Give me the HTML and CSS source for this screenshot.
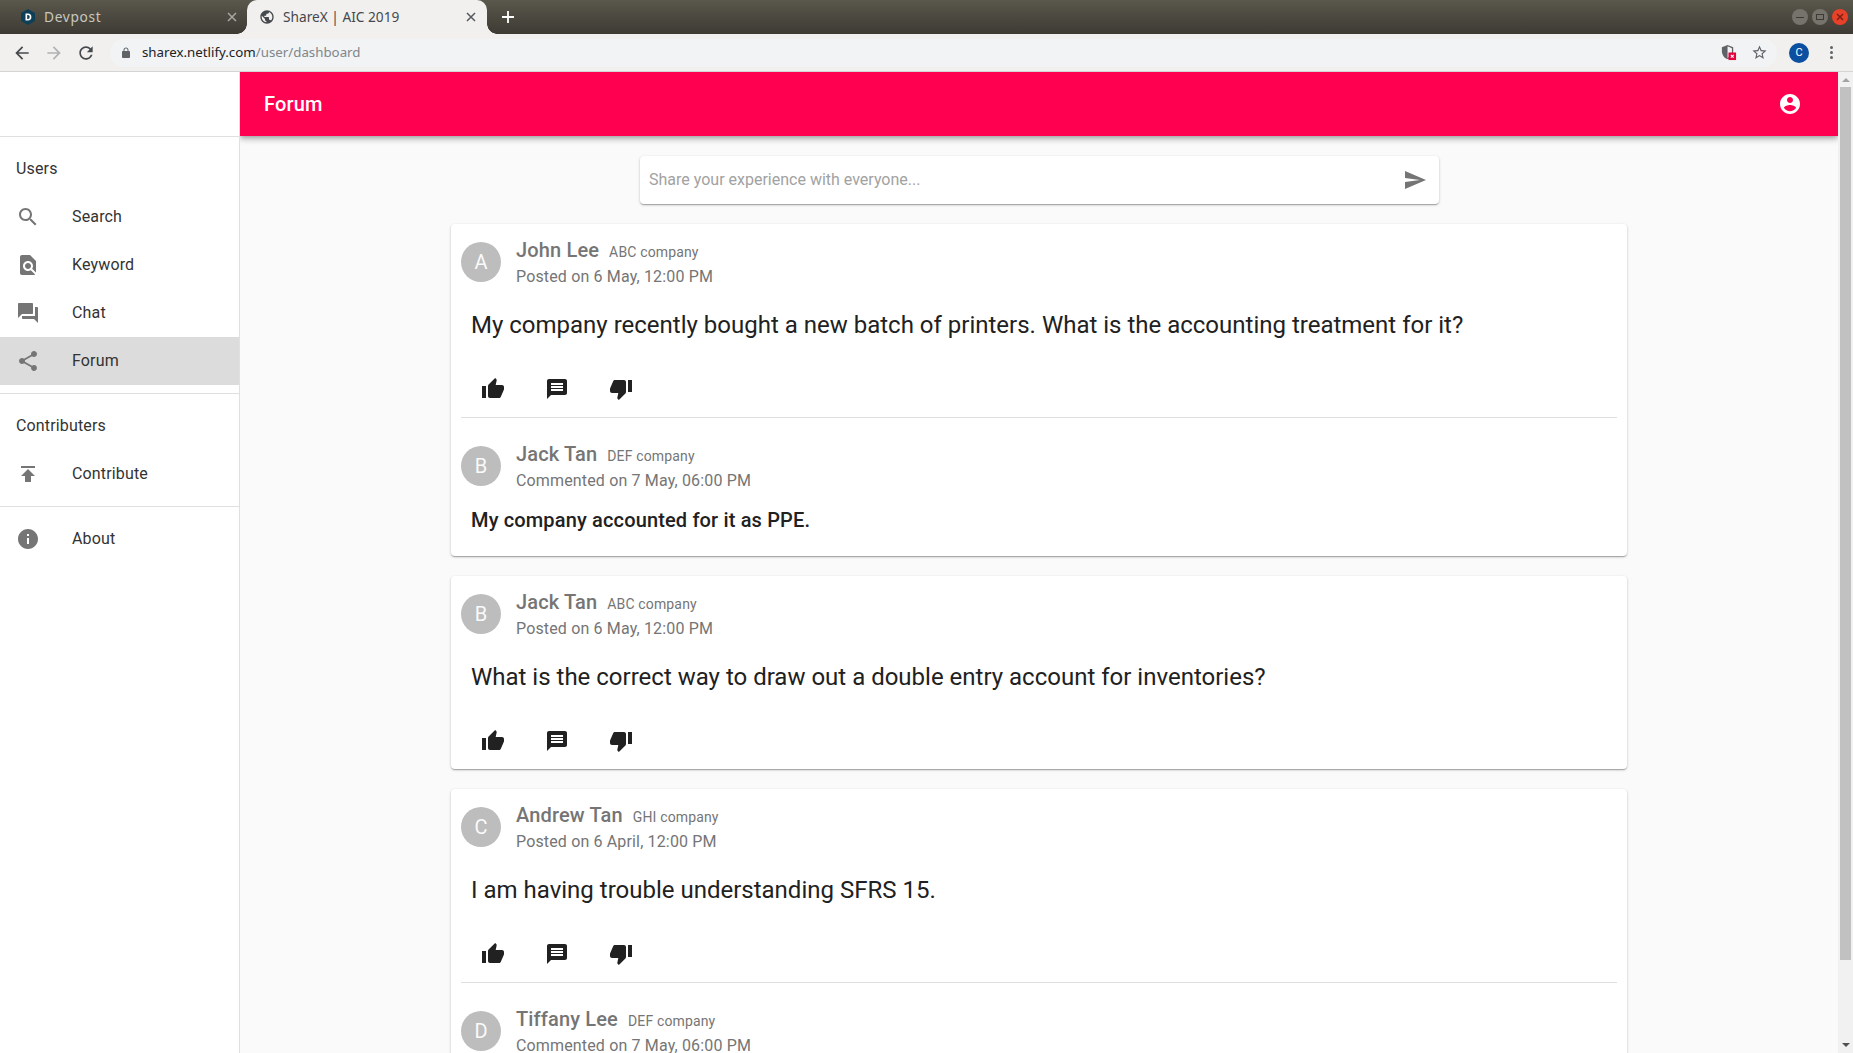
FILE: index.html
```html
<!DOCTYPE html>
<html lang="en">
<head>
    <meta charset="UTF-8">
    <meta name="viewport" content="width=device-width, initial-scale=1.0">
    <title>ShareX | AIC 2019</title>
    <link rel="stylesheet" href="styles.css">
</head>
<body>
<div class="browser-tabs">
    <div class="tab">
        <svg class="tab-icon" viewBox="0 0 16 16"><path fill="#0f3f57" d="M8 0l7 4v8l-7 4-7-4V4z"/><path fill="#fff" d="M5.500 4.500H8c2.200 0 3.400 1.400 3.400 3.500S10.200 11.500 8 11.500H5.500zM7.200 6v4H8c1.100 0 1.700-.8 1.700-2S9.100 6 8 6z"/></svg>
        <span class="tab-title tab-title-wide">Devpost</span>
        <svg class="tab-close" viewBox="0 0 10 10"><path d="M1 1l8 8m0-8l-8 8"/></svg>
    </div>
    <div class="tab tab-active">
        <svg class="tab-icon" viewBox="0 0 24 24"><path fill="#45484c" d="M12 2C6.480 2 2 6.480 2 12s4.480 10 10 10 10-4.480 10-10S17.520 2 12 2zm-1 17.930c-3.950-.49-7-3.850-7-7.930 0-.62.080-1.210.21-1.790L9 15v1c0 1.100.9 2 2 2v1.930zm6.900-2.540c-.26-.81-1-1.390-1.900-1.390h-1v-3c0-.55-.45-1-1-1H8v-2h2c.55 0 1-.45 1-1V7h2c1.100 0 2-.9 2-2v-.41c2.930 1.190 5 4.060 5 7.410 0 2.080-.8 3.970-2.100 5.390z"/></svg>
        <span class="tab-title">ShareX | AIC 2019</span>
        <svg class="tab-close" viewBox="0 0 10 10"><path d="M1 1l8 8m0-8l-8 8"/></svg>
    </div>
    <svg class="new-tab" viewBox="0 0 14 14"><path d="M7 1v12M1 7h12" stroke="#fff" stroke-width="1.800"/></svg>
    <div class="window-buttons">
        <span class="win-btn"><i class="win-min"></i></span>
        <span class="win-btn"><i class="win-max"></i></span>
        <span class="win-btn win-close"><svg viewBox="0 0 10 10"><path d="M2 2l6 6m0-6l-6 6"/></svg></span>
    </div>
</div>

<div class="browser-toolbar">
    <svg class="nav-icon" viewBox="0 0 24 24"><path fill="#45484c" d="M20 11H7.830l5.590-5.590L12 4l-8 8 8 8 1.410-1.410L7.830 13H20v-2z"/></svg>
    <svg class="nav-icon" viewBox="0 0 24 24"><path fill="#b0b2b4" d="M12 4l-1.410 1.410L16.170 11H4v2h12.170l-5.580 5.590L12 20l8-8z"/></svg>
    <svg class="nav-icon" viewBox="0 0 24 24"><path fill="#45484c" d="M17.650 6.350C16.200 4.900 14.210 4 12 4c-4.420 0-7.990 3.580-7.990 8s3.570 8 7.990 8c3.730 0 6.840-2.550 7.730-6h-2.080c-.82 2.330-3.040 4-5.650 4-3.310 0-6-2.690-6-6s2.690-6 6-6c1.660 0 3.140.69 4.220 1.780L13 11h7V4l-2.350 2.350z"/></svg>
    <div class="address-bar">
        <svg class="lock" viewBox="0 0 24 24"><path fill="#5f6368" d="M18 8h-1V6c0-2.760-2.240-5-5-5S7 3.240 7 6v2H6c-1.100 0-2 .9-2 2v10c0 1.100.9 2 2 2h12c1.100 0 2-.9 2-2V10c0-1.100-.9-2-2-2zM9 6c0-1.660 1.340-3 3-3s3 1.340 3 3v2H9V6z"/></svg>
        <span class="url">sharex.netlify.com<span class="url-path">/user/dashboard</span></span>
        <span class="address-right">
            <svg class="shield" viewBox="0 0 18 18"><path fill="#5f6368" d="M8 1L2 3.500v4.200C2 11.500 4.500 15 8 16c3.500-1 6-4.500 6-8.300V3.500z"/><path fill="#f1f3f4" d="M8 2.500v12.300c2.700-1 4.600-3.900 4.600-7V4.400z"/><rect x="9" y="9" width="8" height="8" fill="#e8003d"/><path d="M11.500 11.500l3 3m0-3l-3 3" stroke="#fff" stroke-width="1.200"/></svg>
            <svg class="star" viewBox="0 0 24 24"><path fill="#5f6368" d="M22 9.240l-7.190-.62L12 2 9.190 8.630 2 9.240l5.460 4.730L5.820 21 12 17.270 18.180 21l-1.630-7.030L22 9.240zM12 15.400l-3.760 2.270 1-4.280-3.320-2.880 4.380-.38L12 6.100l1.710 4.040 4.380.38-3.320 2.880 1 4.280L12 15.400z"/></svg>
        </span>
    </div>
    <span class="profile">C</span>
    <span class="menu-dots"><i></i><i></i><i></i></span>
</div>

<div class="app">
    <nav class="sidebar">
        <div class="sidebar-top"></div>
        <div class="nav-group">
            <div class="nav-title"><span>Users</span></div>
            <div class="nav-item">
                <svg class="nav-item-icon" viewBox="0 0 24 24"><path d="M15.500 14h-.79l-.28-.27C15.410 12.590 16 11.110 16 9.500 16 5.910 13.090 3 9.500 3S3 5.910 3 9.500 5.910 16 9.500 16c1.610 0 3.090-.59 4.230-1.570l.27.28v.79l5 4.990L20.490 19l-4.990-5zm-6 0C7.010 14 5 11.990 5 9.500S7.010 5 9.500 5 14 7.010 14 9.500 11.990 14 9.500 14z"/></svg>
                <span>Search</span>
            </div>
            <div class="nav-item">
                <svg class="nav-item-icon" viewBox="0 0 24 24"><path d="M20 19.590V8l-6-6H6c-1.100 0-1.990.9-1.990 2L4 20c0 1.100.89 2 1.990 2H18c.45 0 .85-.15 1.190-.4l-4.430-4.430c-.8.520-1.740.83-2.760.83-2.760 0-5-2.240-5-5s2.240-5 5-5 5 2.240 5 5c0 1.020-.31 1.960-.83 2.750L20 19.590zM9 13c0 1.660 1.340 3 3 3s3-1.340 3-3-1.340-3-3-3-3 1.340-3 3z"/></svg>
                <span>Keyword</span>
            </div>
            <div class="nav-item">
                <svg class="nav-item-icon" viewBox="0 0 24 24"><path d="M21 6h-2v9H6v2c0 .55.45 1 1 1h11l4 4V7c0-.55-.45-1-1-1zm-4 6V3c0-.55-.45-1-1-1H3c-.55 0-1 .45-1 1v14l4-4h10c.55 0 1-.45 1-1z"/></svg>
                <span>Chat</span>
            </div>
            <div class="nav-item nav-item-active">
                <svg class="nav-item-icon" viewBox="0 0 24 24"><path d="M18 16.080c-.76 0-1.440.3-1.960.77L8.910 12.700c.05-.23.09-.46.09-.7s-.04-.47-.09-.7l7.050-4.110c.54.5 1.250.81 2.040.81 1.660 0 3-1.340 3-3s-1.340-3-3-3-3 1.340-3 3c0 .24.04.47.09.7L8.040 9.810C7.500 9.310 6.790 9 6 9c-1.660 0-3 1.340-3 3s1.340 3 3 3c.79 0 1.500-.31 2.040-.81l7.120 4.160c-.05.21-.08.43-.08.65 0 1.610 1.310 2.920 2.920 2.920 1.610 0 2.920-1.310 2.920-2.920s-1.310-2.920-2.920-2.920z"/></svg>
                <span>Forum</span>
            </div>
        </div>
        <div class="nav-group">
            <div class="nav-title"><span>Contributers</span></div>
            <div class="nav-item">
                <svg class="nav-item-icon" viewBox="0 0 24 24"><path d="M5 4v2h14V4H5zm0 10h4v6h6v-6h4l-7-7-7 7z"/></svg>
                <span>Contribute</span>
            </div>
        </div>
        <div class="nav-group">
            <div class="nav-item">
                <svg class="nav-item-icon" viewBox="0 0 24 24"><path d="M12 2C6.480 2 2 6.480 2 12s4.480 10 10 10 10-4.480 10-10S17.520 2 12 2zm1 15h-2v-6h2v6zm0-8h-2V7h2v2z"/></svg>
                <span>About</span>
            </div>
        </div>
    </nav>

    <div class="main">
        <header class="app-bar">
            <h1>Forum</h1>
            <svg class="account-icon" viewBox="0 0 24 24"><path d="M12 2C6.480 2 2 6.480 2 12s4.480 10 10 10 10-4.480 10-10S17.520 2 12 2zm0 3c1.660 0 3 1.340 3 3s-1.340 3-3 3-3-1.340-3-3 1.340-3 3-3zm0 14.200c-2.500 0-4.710-1.280-6-3.220.03-1.990 4-3.080 6-3.080 1.990 0 5.970 1.090 6 3.080-1.290 1.940-3.500 3.220-6 3.220z"/></svg>
        </header>
        <div class="content">
            <div class="share-box">
                <span class="share-placeholder">Share your experience with everyone...</span>
                <svg class="send-icon" viewBox="0 0 24 24"><path d="M2.010 21L23 12 2.010 3 2 10l15 2-15 2z"/></svg>
            </div>

            <article class="card">
                <div class="post-head">
                    <div class="avatar">A</div>
                    <div>
                        <div class="head-line"><span class="name">John Lee</span><span class="company">ABC company</span></div>
                        <div class="date">Posted on 6 May, 12:00 PM</div>
                    </div>
                </div>
                <p class="post-text">My company recently bought a new batch of printers. What is the accounting treatment for it?</p>
                <div class="actions">
                    <svg viewBox="0 0 24 24"><path d="M1 21h4V9H1v12zm22-11c0-1.100-.9-2-2-2h-6.310l.95-4.570.03-.32c0-.41-.17-.79-.44-1.060L14.170 1 7.590 7.590C7.220 7.950 7 8.450 7 9v10c0 1.100.9 2 2 2h9c.83 0 1.540-.5 1.840-1.220l3.020-7.050c.09-.23.14-.47.14-.73v-2z"/></svg>
                    <svg viewBox="0 0 24 24"><path d="M20 2H4c-1.100 0-1.990.9-1.990 2L2 22l4-4h14c1.100 0 2-.9 2-2V4c0-1.100-.9-2-2-2zm-2 12H6v-2h12v2zm0-3H6V9h12v2zm0-3H6V6h12v2z"/></svg>
                    <svg viewBox="0 0 24 24"><path d="M15 3H6c-.83 0-1.540.5-1.840 1.220l-3.020 7.050c-.09.23-.14.47-.14.730v2c0 1.100.9 2 2 2h6.310l-.95 4.570-.03.320c0 .41.170.79.440 1.060L9.830 23l6.590-6.590c.36-.36.580-.86.580-1.410V5c0-1.100-.9-2-2-2zm4 0v12h4V3h-4z"/></svg>
                </div>
                <hr class="card-line">
                <div class="post-head comment-head">
                    <div class="avatar">B</div>
                    <div>
                        <div class="head-line"><span class="name">Jack Tan</span><span class="company">DEF company</span></div>
                        <div class="date">Commented on 7 May, 06:00 PM</div>
                    </div>
                </div>
                <p class="comment-text">My company accounted for it as PPE.</p>
            </article>

            <article class="card">
                <div class="post-head">
                    <div class="avatar">B</div>
                    <div>
                        <div class="head-line"><span class="name">Jack Tan</span><span class="company">ABC company</span></div>
                        <div class="date">Posted on 6 May, 12:00 PM</div>
                    </div>
                </div>
                <p class="post-text">What is the correct way to draw out a double entry account for inventories?</p>
                <div class="actions actions-last">
                    <svg viewBox="0 0 24 24"><path d="M1 21h4V9H1v12zm22-11c0-1.100-.9-2-2-2h-6.310l.95-4.570.03-.32c0-.41-.17-.79-.44-1.060L14.170 1 7.590 7.590C7.220 7.950 7 8.450 7 9v10c0 1.100.9 2 2 2h9c.83 0 1.540-.5 1.840-1.220l3.020-7.050c.09-.23.14-.47.14-.73v-2z"/></svg>
                    <svg viewBox="0 0 24 24"><path d="M20 2H4c-1.100 0-1.990.9-1.990 2L2 22l4-4h14c1.100 0 2-.9 2-2V4c0-1.100-.9-2-2-2zm-2 12H6v-2h12v2zm0-3H6V9h12v2zm0-3H6V6h12v2z"/></svg>
                    <svg viewBox="0 0 24 24"><path d="M15 3H6c-.83 0-1.540.5-1.840 1.220l-3.020 7.050c-.09.23-.14.47-.14.730v2c0 1.100.9 2 2 2h6.310l-.95 4.570-.03.320c0 .41.170.79.440 1.060L9.830 23l6.590-6.590c.36-.36.580-.86.580-1.410V5c0-1.100-.9-2-2-2zm4 0v12h4V3h-4z"/></svg>
                </div>
            </article>

            <article class="card">
                <div class="post-head">
                    <div class="avatar">C</div>
                    <div>
                        <div class="head-line"><span class="name">Andrew Tan</span><span class="company">GHI company</span></div>
                        <div class="date">Posted on 6 April, 12:00 PM</div>
                    </div>
                </div>
                <p class="post-text">I am having trouble understanding SFRS 15.</p>
                <div class="actions">
                    <svg viewBox="0 0 24 24"><path d="M1 21h4V9H1v12zm22-11c0-1.100-.9-2-2-2h-6.310l.95-4.570.03-.32c0-.41-.17-.79-.44-1.060L14.170 1 7.590 7.590C7.220 7.950 7 8.450 7 9v10c0 1.100.9 2 2 2h9c.83 0 1.540-.5 1.840-1.220l3.020-7.050c.09-.23.14-.47.14-.73v-2z"/></svg>
                    <svg viewBox="0 0 24 24"><path d="M20 2H4c-1.100 0-1.990.9-1.990 2L2 22l4-4h14c1.100 0 2-.9 2-2V4c0-1.100-.9-2-2-2zm-2 12H6v-2h12v2zm0-3H6V9h12v2zm0-3H6V6h12v2z"/></svg>
                    <svg viewBox="0 0 24 24"><path d="M15 3H6c-.83 0-1.540.5-1.840 1.220l-3.020 7.050c-.09.23-.14.47-.14.730v2c0 1.100.9 2 2 2h6.310l-.95 4.570-.03.320c0 .41.170.79.440 1.060L9.830 23l6.590-6.590c.36-.36.580-.86.580-1.410V5c0-1.100-.9-2-2-2zm4 0v12h4V3h-4z"/></svg>
                </div>
                <hr class="card-line">
                <div class="post-head comment-head">
                    <div class="avatar">D</div>
                    <div>
                        <div class="head-line"><span class="name">Tiffany Lee</span><span class="company">DEF company</span></div>
                        <div class="date">Commented on 7 May, 06:00 PM</div>
                    </div>
                </div>
            </article>
        </div>
    </div>

    <div class="scrollbar">
        <span class="scroll-arrow scroll-up"></span>
        <div class="scroll-thumb"></div>
        <span class="scroll-arrow scroll-down"></span>
    </div>
</div>
</body>
</html>
```

FILE: styles.css
```css
* {
    box-sizing: border-box;
}

html, body {
    height: 100%;
}

body {
    margin: 0;
    overflow: hidden;
    font-family: Roboto, Arial, sans-serif;
    color: #212121;
    background-color: #fafafa;
}

/* Browser chrome */
.browser-tabs {
    height: 34px;
    display: flex;
    align-items: flex-end;
    background: linear-gradient(#5a584c, #3c3a33);
    font-family: "Noto Sans", sans-serif;
    font-size: 13.700px;
}

.tab {
    width: 246px;
    height: 34px;
    padding: 0 9px 0 20px;
    display: flex;
    align-items: center;
    color: #c9c7bf;
}

.tab-active {
    width: 240px;
    padding: 0 11px 0 12px;
    margin-left: 1px;
    color: #45484c;
    background-color: #f1f0ee;
    border-radius: 10px 10px 0 0;
    position: relative;
}

/* flared bottom corners of the active tab */
.tab-active::before,
.tab-active::after {
    content: "";
    position: absolute;
    bottom: 0;
    width: 10px;
    height: 10px;
}

.tab-active::before {
    left: -10px;
    background: radial-gradient(circle at 0 0, transparent 9.500px, #f1f0ee 10px);
}

.tab-active::after {
    right: -10px;
    background: radial-gradient(circle at 100% 0, transparent 9.500px, #f1f0ee 10px);
}

.tab-icon {
    width: 16px;
    height: 16px;
    flex-shrink: 0;
    margin-right: 8px;
}

.tab-title {
    flex: 1;
    white-space: nowrap;
    margin-bottom: 2px;
}

.tab-title-wide {
    letter-spacing: 0.7px;
}

.tab-close {
    width: 10px;
    height: 10px;
    fill: none;
    stroke: #a9a8a1;
    stroke-width: 1.500;
}

.tab-active .tab-close {
    stroke: #55585c;
}

.new-tab {
    width: 14px;
    height: 14px;
    margin: 0 0 10px 14px;
}

.window-buttons {
    margin-left: auto;
    height: 34px;
    padding-right: 5px;
    display: flex;
    align-items: center;
    gap: 4px;
}

.win-btn {
    width: 16px;
    height: 16px;
    border-radius: 50%;
    background-color: #75736b;
    display: flex;
    align-items: center;
    justify-content: center;
}

.win-close {
    background-color: #e8412a;
}

.win-close svg {
    width: 10px;
    height: 10px;
    fill: none;
    stroke: #7a2010;
    stroke-width: 1.500;
}

.win-min {
    width: 8px;
    height: 1px;
    background-color: #3c3a33;
}

.win-max {
    width: 8px;
    height: 6px;
    border: 1px solid #3c3a33;
}

.browser-toolbar {
    height: 38px;
    padding: 0 8px 0 12px;
    display: flex;
    align-items: center;
    background-color: #f1f0ee;
    border-bottom: 1px solid #d4d4d4;
}

.nav-icon {
    width: 20px;
    height: 20px;
    margin-right: 12px;
}

.address-bar {
    flex: 1;
    height: 28px;
    margin-left: 2px;
    display: flex;
    align-items: center;
    padding-left: 10px;
    background-color: #f1f3f4;
    border-radius: 14px;
    font-family: "Noto Sans", sans-serif;
    font-size: 13.300px;
    color: #202124;
}

.lock {
    width: 12px;
    height: 12px;
    margin-right: 10px;
}

.url {
    margin-bottom: 2px;
}

.url-path {
    color: #80868b;
}

.address-right {
    margin-left: auto;
    display: flex;
    align-items: center;
    gap: 14px;
    margin-right: 9px;
}

.shield {
    width: 17px;
    height: 17px;
}

.star {
    width: 17px;
    height: 17px;
}

.profile {
    width: 20px;
    height: 20px;
    margin-left: 12px;
    border-radius: 50%;
    background-color: #0b50a0;
    color: #fff;
    font-size: 11px;
    display: flex;
    align-items: center;
    justify-content: center;
    margin-right: 21px;
}

.menu-dots {
    display: flex;
    flex-direction: column;
    gap: 2px;
    margin-right: 12px;
}

.menu-dots i {
    width: 3px;
    height: 3px;
    border-radius: 50%;
    background-color: #5f6368;
}

/* Page */
.app {
    height: 981px;
    display: flex;
}

.sidebar {
    width: 240px;
    flex-shrink: 0;
    background-color: #fff;
    border-right: 1px solid #e0e0e0;
}

.sidebar-top {
    height: 65px;
    border-bottom: 1px solid #e0e0e0;
}

.nav-group {
    padding: 8px 0;
    border-bottom: 1px solid #e0e0e0;
    font-size: 16px;
    letter-spacing: 0.00938em;
}

.nav-group:last-child {
    border-bottom: none;
}

.nav-title,
.nav-item {
    height: 48px;
    padding-left: 16px;
    display: flex;
    align-items: center;
    color: #333;
}

.nav-title span,
.nav-item span {
    margin-bottom: 2px;
}

.nav-item-active {
    background-color: #dcdcdc;
}

.nav-item-icon {
    width: 24px;
    height: 24px;
    margin-right: 32px;
    fill: #757575;
}

.main {
    flex: 1;
    min-width: 0;
    display: flex;
    flex-direction: column;
    overflow: hidden;
}

.app-bar {
    height: 64px;
    flex-shrink: 0;
    padding: 0 24px;
    display: flex;
    align-items: center;
    justify-content: space-between;
    background-color: #ff0050;
    color: #fff;
    box-shadow: 0 2px 4px -1px rgba(0, 0, 0, 0.2), 0 4px 5px 0 rgba(0, 0, 0, 0.14), 0 1px 10px 0 rgba(0, 0, 0, 0.12);
    position: relative;
}

.app-bar h1 {
    margin: 0;
    font-size: 20px;
    font-weight: 500;
    letter-spacing: 0.0075em;
}

.account-icon {
    width: 24px;
    height: 24px;
    fill: #fff;
    margin-right: 12px;
}

.content {
    flex: 1;
    padding-top: 20px;
    display: flex;
    flex-direction: column;
    align-items: center;
}

.share-box {
    width: 799px;
    height: 48px;
    flex-shrink: 0;
    margin-left: 1px;
    padding: 0 10px 0 9px;
    display: flex;
    align-items: center;
    justify-content: space-between;
    background-color: #fff;
    border-radius: 4px;
    box-shadow: 0 1px 3px 0 rgba(0, 0, 0, 0.2), 0 1px 1px 0 rgba(0, 0, 0, 0.14), 0 2px 1px -1px rgba(0, 0, 0, 0.12);
    margin-bottom: 20px;
}

.share-placeholder {
    font-size: 16px;
    color: #a2a2a2;
    margin-bottom: 2px;
}

.send-icon {
    width: 24px;
    height: 24px;
    fill: #757575;
    margin-right: 2px;
}

.card {
    width: 1176px;
    flex-shrink: 0;
    padding: 18px 10px 0;
    background-color: #fff;
    border-radius: 4px;
    box-shadow: 0 1px 3px 0 rgba(0, 0, 0, 0.2), 0 1px 1px 0 rgba(0, 0, 0, 0.14), 0 2px 1px -1px rgba(0, 0, 0, 0.12);
    margin-bottom: 20px;
}

.post-head {
    display: flex;
    align-items: flex-start;
    gap: 15px;
}

.avatar {
    width: 40px;
    height: 40px;
    flex-shrink: 0;
    border-radius: 50%;
    background-color: #bdbdbd;
    color: #fafafa;
    font-size: 20px;
    display: flex;
    align-items: center;
    justify-content: center;
}

.head-line {
    height: 26px;
    display: flex;
    align-items: baseline;
    gap: 10px;
    margin-top: -5px;
    line-height: 26px;
}

.name {
    font-size: 20px;
    font-weight: 500;
    letter-spacing: 0.0075em;
    color: #757575;
}

.company {
    font-size: 14px;
    letter-spacing: 0.01071em;
    color: #757575;
}

.date {
    font-size: 16px;
    line-height: 24px;
    letter-spacing: 0.00938em;
    color: #757575;
    margin-top: 2px;
}

.post-text {
    margin: 20px 0 0 10px;
    font-size: 24px;
    line-height: 32px;
    color: #212121;
}

.actions {
    margin-top: 33px;
    height: 30px;
    padding-left: 20px;
    display: flex;
    align-items: center;
    gap: 40px;
}

.actions svg {
    width: 24px;
    height: 24px;
    fill: #212121;
}

.actions-last {
    margin-bottom: 13px;
}

.card-line {
    margin: 13px 0 0;
    border: none;
    height: 1px;
    background-color: #e0e0e0;
}

.comment-head {
    margin-top: 28px;
}

.comment-text {
    margin: 14px 0 0 10px;
    font-size: 20px;
    line-height: 26px;
    font-weight: 500;
    letter-spacing: 0.0075em;
    color: #212121;
    padding-bottom: 23px;
}

.scrollbar {
    width: 15px;
    flex-shrink: 0;
    background-color: #f1f1f1;
    display: flex;
    flex-direction: column;
    align-items: center;
    padding-top: 6px;
    padding-bottom: 6px;
}

.scroll-thumb {
    width: 11px;
    height: 873px;
    margin-top: 5px;
    background-color: #c1c1c1;
}

.scroll-arrow {
    width: 0;
    height: 0;
    border-left: 4px solid transparent;
    border-right: 4px solid transparent;
}

.scroll-up {
    border-bottom: 4px solid #a3a3a3;
}

.scroll-down {
    margin-top: auto;
    border-top: 4px solid #505050;
}
```
